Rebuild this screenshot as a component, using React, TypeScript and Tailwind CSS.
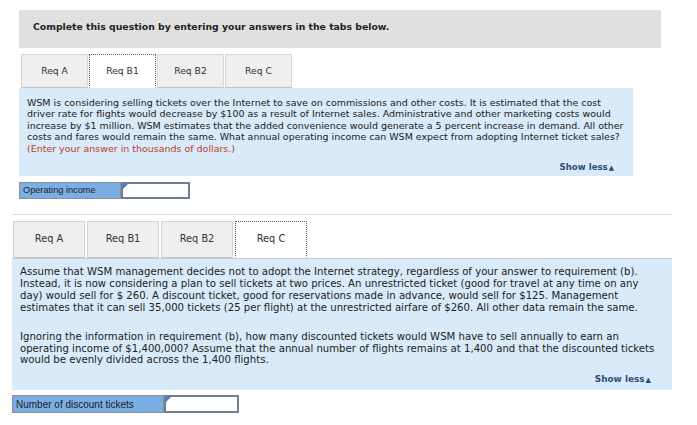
import React from "react";

const body = { fontFamily: '"DejaVu Sans", Verdana, sans-serif' };
const arial = { fontFamily: '"Liberation Sans", Arial, sans-serif' };

function Tab({ label, active, w, h, size }: { label: string; active?: boolean; w: string; h: string; size: string }) {
  return (
    <div
      className={`${w} ${h} ${size} flex items-center justify-center text-[#333] ${
        active
          ? "bg-white border border-dotted border-[#4a5a78] border-b-white"
          : "bg-[#efefef] border border-[#d6d6d6] border-b-[#c4c4c4]"
      }`}
    >
      {label}
    </div>
  );
}

function InputMark() {
  return (
    <svg width="5" height="5" viewBox="0 0 5 5" className="absolute left-0 top-0">
      <polygon points="0,0 5,0 0,5" fill="#3d7fd1" />
    </svg>
  );
}

function ShowLess({ size }: { size: string }) {
  return (
    <span className={`${size} font-bold text-[#2c4b7e] whitespace-nowrap`}>
      Show less<span className="text-[0.8em] ml-px">▲</span>
    </span>
  );
}

export default function App() {
  return (
    <div className="w-[697px] h-[425px] bg-white overflow-hidden" style={body}>
      <div className="pt-[10px] pl-[19px]">
        <div className="w-[642px] h-[38px] bg-[#e0e0e0] pl-[14px] pt-[11px] text-[9.3px] font-bold text-[#222] leading-[12px]">
          Complete this question by entering your answers in the tabs below.
        </div>
        <div className="mt-[6px] ml-[2px] flex gap-[1px]">
          <Tab label="Req A" w="w-[67px]" h="h-[34px]" size="text-[9.2px]" />
          <Tab label="Req B1" active w="w-[67px]" h="h-[34px]" size="text-[9.2px]" />
          <Tab label="Req B2" w="w-[67px]" h="h-[34px]" size="text-[9.2px]" />
          <Tab label="Req C" w="w-[67px]" h="h-[34px]" size="text-[9.2px]" />
        </div>
        <div className="w-[614px] h-[88px] bg-[#d9eaf8] px-[8px] pt-[9px] text-[9.48px] leading-[11.4px] text-[#222]">
          <div className="whitespace-nowrap">
            WSM is considering selling tickets over the Internet to save on commissions and other costs. It is estimated that the cost
            <br />
            driver rate for flights would decrease by $100 as a result of Internet sales. Administrative and other marketing costs would
            <br />
            increase by $1 million. WSM estimates that the added convenience would generate a 5 percent increase in demand. All other
            <br />
            costs and fares would remain the same. What annual operating income can WSM expect from adopting Internet ticket sales?
            <br />
            <span className="text-[#c0392b]">(Enter your answer in thousands of dollars.)</span>
          </div>
          <div className="mt-[8px] flex justify-end pr-[11px] leading-[10px]">
            <ShowLess size="text-[8.6px]" />
          </div>
        </div>
        <div className="mt-[6px] flex h-[17px]">
          <div className="w-[102px] h-full bg-[#7bafe4] border border-[#8b9198] pl-[3px] flex items-center text-[9.2px] text-[#222]" style={arial}>
            Operating income
          </div>
          <div className="relative w-[69px] h-full bg-white border-2 border-[#6f7e91]">
            <InputMark />
          </div>
        </div>
      </div>

      <div className="mt-[15px] ml-[12px] w-[660px] h-px bg-[#dcdcdc]" />

      <div className="pl-[12px]">
        <div className="mt-[6px] ml-[1px] flex gap-[2px]">
          <Tab label="Req A" w="w-[72px]" h="h-[37px]" size="text-[9.8px]" />
          <Tab label="Req B1" w="w-[72px]" h="h-[37px]" size="text-[9.8px]" />
          <Tab label="Req B2" w="w-[72px]" h="h-[37px]" size="text-[9.8px]" />
          <Tab label="Req C" active w="w-[72px]" h="h-[37px]" size="text-[9.8px]" />
        </div>
        <div className="w-[660px] h-[132px] bg-[#d9eaf8] border-t border-[#c9cfd6] px-[8px] pt-[7px] text-[10.15px] leading-[11.9px] text-[#222]">
          <div className="whitespace-nowrap">
            Assume that WSM management decides not to adopt the Internet strategy, regardless of your answer to requirement (b).
            <br />
            Instead, it is now considering a plan to sell tickets at two prices. An unrestricted ticket (good for travel at any time on any
            <br />
            day) would sell for $ 260. A discount ticket, good for reservations made in advance, would sell for $125. Management
            <br />
            estimates that it can sell 35,000 tickets (25 per flight) at the unrestricted airfare of $260. All other data remain the same.
          </div>
          <div className="mt-[17px] whitespace-nowrap">
            Ignoring the information in requirement (b), how many discounted tickets would WSM have to sell annually to earn an
            <br />
            operating income of $1,400,000? Assume that the annual number of flights remains at 1,400 and that the discounted tickets
            <br />
            would be evenly divided across the 1,400 flights.
          </div>
          <div className="mt-[8px] flex justify-end pr-[13px] leading-[10px]">
            <ShowLess size="text-[8.9px]" />
          </div>
        </div>
        <div className="mt-[5px] flex h-[18px]">
          <div className="w-[152px] h-full bg-[#7bafe4] border border-[#8b9198] pl-[3px] flex items-center text-[10px] text-[#222]" style={arial}>
            Number of discount tickets
          </div>
          <div className="relative w-[75px] h-full bg-white border-2 border-[#6f7e91]">
            <InputMark />
          </div>
        </div>
      </div>
    </div>
  );
}
